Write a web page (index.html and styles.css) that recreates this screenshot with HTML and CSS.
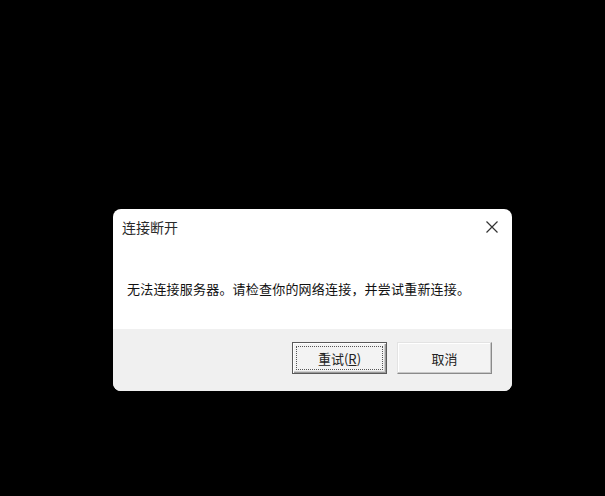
FILE: index.html
```html
<!DOCTYPE html>
<html lang="zh-CN">
<head>
<meta charset="utf-8">
<title>连接断开</title>
<link rel="stylesheet" href="styles.css">
</head>
<body>
<div class="screen">
  <div class="dialog">
    <div class="titlebar">
      <span class="title">连接断开</span>
      <span class="close" aria-label="关闭">
        <svg width="12" height="12" viewBox="0 0 12 12"><path d="M0.5 0.5 L11.5 11.5 M11.5 0.5 L0.5 11.5" stroke="#333" stroke-width="1.2" fill="none"/></svg>
      </span>
    </div>
    <div class="content">
      <p class="message">无法连接服务器。请检查你的网络连接，并尝试重新连接。</p>
    </div>
    <div class="footer">
      <button class="btn btn-default"><span class="focus">重试(<u>R</u>)</span></button>
      <button class="btn">取消</button>
    </div>
  </div>
</div>
</body>
</html>
```
FILE: styles.css
```css
html, body {
  margin: 0;
  padding: 0;
  background: #000;
}
body {
  width: 605px;
  height: 496px;
  overflow: hidden;
  font-family: "Noto Sans CJK SC", "Microsoft YaHei", sans-serif;
}
.screen {
  padding: 209px 0 0 113px;
}
.dialog {
  width: 399px;
  height: 182px;
  background: #fff;
  border-radius: 8px;
  overflow: hidden;
  display: flex;
  flex-direction: column;
}
.titlebar {
  height: 36px;
  display: flex;
  align-items: center;
  justify-content: space-between;
  padding: 0 14px 0 9px;
}
.title {
  font-size: 14px;
  color: #2a2a2a;
  line-height: 1;
}
.close {
  width: 12px;
  height: 12px;
  display: flex;
}
.content {
  flex: 1;
  display: flex;
  align-items: center;
  padding: 3px 14px 0 14px;
}
.message {
  margin: 0;
  font-size: 13px;
  color: #111;
  line-height: 1;
  letter-spacing: 0.2px;
}
.footer {
  height: 62px;
  background: #f0f0f0;
  display: flex;
  justify-content: flex-end;
  align-items: flex-start;
  gap: 10px;
  padding: 13px 20px 0 0;
  box-sizing: border-box;
}
.btn {
  width: 95px;
  height: 32px;
  margin: 0;
  padding: 0;
  font-family: inherit;
  font-size: 13px;
  color: #222;
  background: #f3f3f3;
  border: 1px solid;
  border-color: #e3e3e3 #8a8a8a #8a8a8a #e3e3e3;
  box-shadow: inset -1px -1px 0 #c8c8c8, inset 1px 1px 0 #fff;
  display: flex;
  align-items: center;
  justify-content: center;
}
.btn-default {
  border-color: #5a5a5a;
  box-shadow: inset 1px 1px 0 #fdfdfd, inset -1px -1px 0 #9a9a9a, inset -2px -2px 0 #cfcfcf;
  padding: 3px;
}
.btn-default .focus {
  flex: 1;
  align-self: stretch;
  display: flex;
  align-items: center;
  justify-content: center;
  border: 1px dotted #555;
}
.btn u {
  text-decoration: underline;
  text-underline-offset: 1px;
}
```
